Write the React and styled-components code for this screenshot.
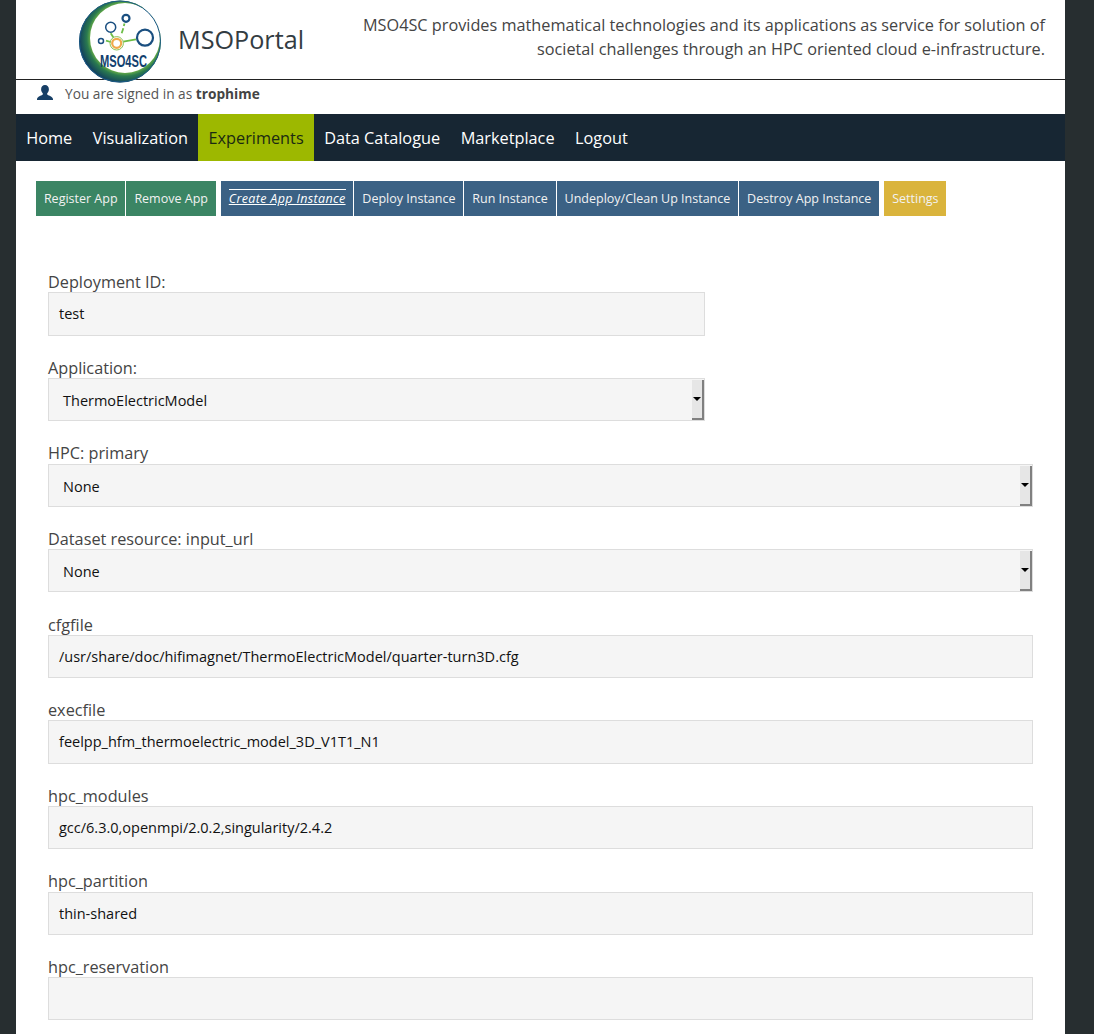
import styled, { createGlobalStyle } from "styled-components";

const GlobalStyle = createGlobalStyle`
  html, body {
    margin: 0;
    padding: 0;
    height: 1034px;
    overflow: hidden;
    background: #272e30;
    font-family: "Open Sans", sans-serif;
  }
`;

const Page = styled.div`
  width: 1049px;
  height: 1034px;
  margin-left: 16px;
  background: #fff;
  overflow: hidden;
`;

const Header = styled.header`
  display: flex;
  justify-content: space-between;
  height: 79px;
  border-bottom: 1px solid #222;
`;

const Brand = styled.div`
  display: flex;
  align-items: flex-start;
  padding-left: 62px;
`;

const Logo = styled.svg`
  width: 84px;
  height: 84px;
  position: relative;
  z-index: 2;
  flex: none;
`;

const SiteName = styled.div`
  margin: 19px 0 0 16px;
  font-size: 25.2px;
  line-height: 40px;
  color: #333c42;
`;

const Slogan = styled.div`
  width: 700px;
  padding: 13px 20px 0 0;
  text-align: right;
  font-size: 16.25px;
  line-height: 24px;
  color: #444;
`;

const UserRow = styled.div`
  display: flex;
  align-items: center;
  height: 26px;
  padding: 0 0 8px 20px;
  font-size: 13.7px;
  color: #555;

  b {
    color: #444;
    font-weight: 700;
  }
`;

const UserIcon = styled.svg`
  width: 18px;
  height: 18px;
  margin-right: 11px;
  color: #173f66;
`;

const Nav = styled.nav`
  display: flex;
  height: 47px;
  background: #172633;
`;

const NavItem = styled.a`
  padding: 0 10.25px;
  font-size: 16.3px;
  line-height: 48px;
  color: ${(p) => (p.$active ? "#1b2a12" : "#fff")};
  background: ${(p) => (p.$active ? "#9db800" : "transparent")};
`;

const Tabs = styled.div`
  display: flex;
  padding: 20px 0 0 20px;
`;

const TabGroup = styled.div`
  display: flex;
  gap: 1px;
  margin-right: 5px;
`;

const Tab = styled.a`
  height: 35px;
  padding: 0 7.92px;
  font-size: 12.5px;
  line-height: 35px;
  white-space: nowrap;
  color: #f2f2f2;
  background: ${(p) => p.$color};
`;

const ActiveTabLabel = styled.span`
  display: inline-block;
  line-height: 18px;
  border-top: 1px solid #fff;
  font-style: italic;
  letter-spacing: 0.35px;
  text-decoration: underline;
  color: #fff;
`;

const Form = styled.form`
  padding: 56.4px 32px 0;
`;

const Field = styled.div`
  display: flow-root;
  height: 85.6px;
`;

const Label = styled.label`
  display: block;
  height: 20.1px;
  margin-top: -0.1px;
  font-size: 16.25px;
  line-height: 20px;
  color: #444;
`;

const Input = styled.div`
  box-sizing: border-box;
  width: ${(p) => (p.$short ? "657px" : "985px")};
  height: 43.2px;
  padding-left: 10px;
  border: 1px solid #ddd;
  background: #f5f5f5;
  font-size: 14.5px;
  line-height: 42.4px;
  color: #111;
`;

const SelectBox = styled(Input)`
  position: relative;
  padding-left: 14px;
  line-height: 43px;
`;

const SelectButton = styled.span`
  position: absolute;
  top: 1px;
  right: 0;
  bottom: 0;
  display: flex;
  align-items: center;
  justify-content: center;
  box-sizing: border-box;
  width: 12px;
  border-right: 2px solid #808080;
  border-bottom: 2px solid #808080;
  background: #e6e6e6;

  &::after {
    content: "";
    border-top: 4px solid #000;
    border-left: 4px solid transparent;
    border-right: 4px solid transparent;
  }
`;

const LogoMark = () => (
  <Logo viewBox="0 0 84 84">
    <defs>
      <radialGradient id="ring" gradientUnits="userSpaceOnUse" cx="47" cy="38" r="46">
        <stop offset="0.76" stopColor="#5fa648" />
        <stop offset="0.83" stopColor="#2a7a4f" />
        <stop offset="1" stopColor="#123f5e" />
      </radialGradient>
    </defs>
    <circle cx="42" cy="41.500" r="41" fill="#fff" />
    <path
      fillRule="evenodd"
      d="M42 0.500a41 41 0 1 0 0 82a41 41 0 0 0 0-82zM47 3a35 35 0 1 1 0 70a35 35 0 0 1 0-70z"
      fill="url(#ring)"
    />
    <circle cx="42" cy="41.500" r="40.500" fill="none" stroke="#1c5a86" strokeWidth="1" />
    <g fill="none" stroke="#1a4f80">
      <circle cx="32.700" cy="27.300" r="5" strokeWidth="1.500" />
      <circle cx="48" cy="18.300" r="3.500" strokeWidth="2.200" />
      <circle cx="67" cy="37.700" r="8" strokeWidth="2.200" />
      <circle cx="23" cy="41" r="2.500" strokeWidth="1.500" />
    </g>
    <g stroke="#6cbd45" strokeWidth="1.800" fill="none">
      <path d="M43.700 33.300L45.300 28.300" />
      <path d="M45.800 26L46.500 23.500" />
      <path d="M45.300 41.700L58 39.300" />
      <path d="M28 40.700L32.700 42" />
      <path d="M35.300 37.300L32.700 33.300" />
    </g>
    <circle cx="38.700" cy="43.300" r="4.500" fill="none" stroke="#f0a94a" strokeWidth="2.200" />
    <circle cx="38.700" cy="43.300" r="6.700" fill="none" stroke="#8cc152" strokeWidth="1" />
    <text
      transform="translate(45.500 67) scale(0.674 1)"
      textAnchor="middle"
      fontFamily="Liberation Sans, sans-serif"
      fontWeight="700"
      fontSize="16.500"
      fill="#123f6e"
    >
      MSO4SC
    </text>
  </Logo>
);

const fields = [
  { label: "Deployment ID:", value: "test", short: true },
  { label: "Application:", value: "ThermoElectricModel", short: true, select: true },
  { label: "HPC: primary", value: "None", select: true },
  { label: "Dataset resource: input_url", value: "None", select: true },
  { label: "cfgfile", value: "/usr/share/doc/hifimagnet/ThermoElectricModel/quarter-turn3D.cfg" },
  { label: "execfile", value: "feelpp_hfm_thermoelectric_model_3D_V1T1_N1" },
  { label: "hpc_modules", value: "gcc/6.3.0,openmpi/2.0.2,singularity/2.4.2" },
  { label: "hpc_partition", value: "thin-shared" },
  { label: "hpc_reservation", value: "" },
];

const navItems = ["Home", "Visualization", "Experiments", "Data Catalogue", "Marketplace", "Logout"];

export default function App() {
  return (
    <>
      <GlobalStyle />
      <Page>
        <Header>
          <Brand>
            <LogoMark />
            <SiteName>MSOPortal</SiteName>
          </Brand>
          <Slogan>
            MSO4SC provides mathematical technologies and its applications as service for solution of
            societal challenges through an HPC oriented cloud e-infrastructure.
          </Slogan>
        </Header>
        <UserRow>
          <UserIcon viewBox="0 0 18 18">
            <path
              fill="currentColor"
              d="M9 1c2.400 0 3.900 1.800 3.900 4.200c0 1.700-.7 3.200-1.700 4.100v1.300c.5.8 5.200 1.600 5.800 4.400v1H1v-1c.6-2.800 5.300-3.600 5.800-4.400V9.300C5.800 8.400 5.100 6.900 5.100 5.200C5.100 2.800 6.600 1 9 1z"
            />
          </UserIcon>
          <span>
            You are signed in as <b>trophime</b>
          </span>
        </UserRow>
        <Nav>
          {navItems.map((item) => (
            <NavItem key={item} $active={item === "Experiments"}>
              {item}
            </NavItem>
          ))}
        </Nav>
        <Tabs>
          <TabGroup>
            <Tab $color="#3b8564">Register App</Tab>
            <Tab $color="#3b8564">Remove App</Tab>
          </TabGroup>
          <TabGroup>
            <Tab $color="#3b6184">
              <ActiveTabLabel>Create App Instance</ActiveTabLabel>
            </Tab>
            <Tab $color="#3b6184">Deploy Instance</Tab>
            <Tab $color="#3b6184">Run Instance</Tab>
            <Tab $color="#3b6184">Undeploy/Clean Up Instance</Tab>
            <Tab $color="#3b6184">Destroy App Instance</Tab>
          </TabGroup>
          <Tab $color="#dab43c">Settings</Tab>
        </Tabs>
        <Form>
          {fields.map((f) => (
            <Field key={f.label}>
              <Label>{f.label}</Label>
              {f.select ? (
                <SelectBox $short={f.short}>
                  {f.value}
                  <SelectButton />
                </SelectBox>
              ) : (
                <Input $short={f.short}>{f.value}</Input>
              )}
            </Field>
          ))}
        </Form>
      </Page>
    </>
  );
}
